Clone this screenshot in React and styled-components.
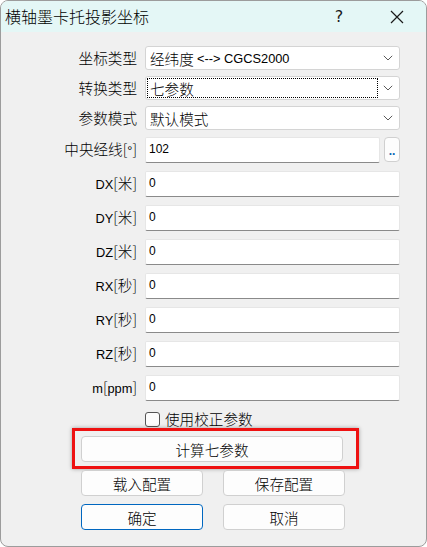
import styled, { createGlobalStyle } from "styled-components";

const GlobalStyle = createGlobalStyle`
  * { box-sizing: border-box; }
  body {
    margin: 0;
    background: #ffffff;
    font-family: "Noto Sans CJK SC", "Noto Sans", sans-serif;
  }
`;

const CJK = `"Noto Sans CJK SC", sans-serif`;
const LATIN = `"Liberation Sans", "Noto Sans CJK SC", sans-serif`;

const params = [
  { name: "DX", unit: "米" },
  { name: "DY", unit: "米" },
  { name: "DZ", unit: "米" },
  { name: "RX", unit: "秒" },
  { name: "RY", unit: "秒" },
  { name: "RZ", unit: "秒" },
  { name: "m", unit: "ppm", latinUnit: true },
];

function Chevron() {
  return (
    <svg width="10" height="6" viewBox="0 0 10 6">
      <path d="M0.8 0.8 L5 5 L9.2 0.8" fill="none" stroke="#5a5a5a" strokeWidth="1" />
    </svg>
  );
}

function Combo({ children, focus }) {
  return (
    <ComboBox>
      <ComboValue $focus={focus}>{children}</ComboValue>
      <Chevron />
    </ComboBox>
  );
}

export default function App() {
  return (
    <>
      <GlobalStyle />
      <Window>
        <TitleBar>
          <Title>横轴墨卡托投影坐标</Title>
          <CaptionButton>?</CaptionButton>
          <CaptionButton>
            <svg width="14" height="14" viewBox="0 0 14 14">
              <path d="M1 1 L13 13 M13 1 L1 13" stroke="#1a1a1a" strokeWidth="1.2" />
            </svg>
          </CaptionButton>
        </TitleBar>

        <Body>
          <Row $h={24}>
            <Label>坐标类型</Label>
            <Combo>
              经纬度 <Lat>&lt;--&gt; CGCS2000</Lat>
            </Combo>
          </Row>
          <Row $h={24} $mt={6}>
            <Label>转换类型</Label>
            <Combo focus>七参数</Combo>
          </Row>
          <Row $h={24} $mt={6}>
            <Label>参数模式</Label>
            <Combo>默认模式</Combo>
          </Row>
          <Row $h={26} $mt={7}>
            <Label>
              中央经线[<Lat>°</Lat>]
            </Label>
            <FieldWithButton>
              <TextInput>102</TextInput>
              <DotsButton>..</DotsButton>
            </FieldWithButton>
          </Row>

          {params.map((p) => (
            <Row key={p.name} $h={26} $mt={8}>
              <Label>
                <Lat>{p.name}</Lat>[
                {p.latinUnit ? <Lat>{p.unit}</Lat> : p.unit}]
              </Label>
              <TextInput>0</TextInput>
            </Row>
          ))}

          <Row $h={16} $mt={10}>
            <span />
            <CheckLine>
              <CheckBox />
              使用校正参数
            </CheckLine>
          </Row>

          <Highlight>
            <Button>计算七参数</Button>
          </Highlight>

          <ButtonRow $mt={1}>
            <Button>载入配置</Button>
            <Button>保存配置</Button>
          </ButtonRow>
          <ButtonRow $mt={8}>
            <Button $primary>确定</Button>
            <Button>取消</Button>
          </ButtonRow>
        </Body>
      </Window>
    </>
  );
}

const Window = styled.div`
  width: 427px;
  height: 547px;
  border: 1px solid #9c9c9c;
  border-radius: 8px;
  overflow: hidden;
  background: #f0f0f0;
  display: flex;
  flex-direction: column;
`;

const TitleBar = styled.div`
  height: 31px;
  background: #e4f7f6;
  display: flex;
  align-items: center;
  padding-left: 4px;
  flex-shrink: 0;
`;

const Title = styled.div`
  flex: 1;
  font-family: ${CJK};
  font-size: 16px;
  font-weight: 300;
  color: #000;
  line-height: 31px;
`;

const CaptionButton = styled.div`
  width: 58px;
  height: 31px;
  display: flex;
  align-items: center;
  justify-content: center;
  font-family: "DejaVu Sans", sans-serif;
  font-size: 16px;
  color: #1a1a1a;
`;

const Body = styled.div`
  padding-top: 14px;
  display: flex;
  flex-direction: column;
`;

const Row = styled.div`
  display: grid;
  grid-template-columns: 136px 255px;
  column-gap: 8px;
  height: ${(p) => p.$h}px;
  margin-top: ${(p) => p.$mt || 0}px;
`;

const Label = styled.div`
  align-self: center;
  text-align: right;
  font-family: ${CJK};
  font-size: 14.6px;
  font-weight: 300;
  line-height: 18px;
  color: #000;
  white-space: nowrap;
`;

const Lat = styled.span`
  font-family: ${LATIN};
  font-weight: 400;
  font-size: 12.8px;
`;

const ComboBox = styled.div`
  height: 100%;
  background: #ffffff;
  border: 1px solid #d4d4d4;
  border-radius: 3px;
  display: flex;
  align-items: center;
  padding-right: 6px;
  gap: 6px;
`;

const ComboValue = styled.div`
  flex: 1;
  height: 18px;
  margin-left: 2px;
  padding-left: 2px;
  display: flex;
  align-items: center;
  font-family: ${CJK};
  font-size: 14.6px;
  font-weight: 300;
  color: #000;
  white-space: pre;
  outline: ${(p) => (p.$focus ? "1px dotted #000" : "none")};
`;

const TextInput = styled.div`
  height: 100%;
  flex: 1;
  background: #ffffff;
  border: 1px solid #e6e6e6;
  border-bottom: 1px solid #8a8a8a;
  border-radius: 2px;
  padding: 4px 0 0 3px;
  font-family: ${LATIN};
  font-size: 12px;
  line-height: 14px;
  color: #000;
`;

const FieldWithButton = styled.div`
  display: flex;
  gap: 4px;
  height: 100%;
`;

const DotsButton = styled.div`
  width: 16px;
  height: 25px;
  background: #fdfdfd;
  border: 1px solid #d0d0d0;
  border-radius: 4px;
  display: flex;
  align-items: flex-end;
  justify-content: center;
  padding-bottom: 5px;
  font-family: ${LATIN};
  font-weight: bold;
  font-size: 12px;
  line-height: 10px;
  color: #0a64b4;
`;

const CheckLine = styled.label`
  display: flex;
  align-items: center;
  gap: 5px;
  font-family: ${CJK};
  font-size: 14.6px;
  font-weight: 300;
  line-height: 16px;
  color: #000;
`;

const CheckBox = styled.span`
  width: 15px;
  height: 15px;
  border: 1px solid #555;
  border-radius: 3px;
  background: #fdfdfd;
`;

const Highlight = styled.div`
  margin: 1px 0 0 71px;
  width: 287px;
  border: 3px solid #ee1111;
  padding: 5px 13px 4px 6px;
  box-shadow: 0 0 4px rgba(0, 0, 0, 0.35);
`;

const ButtonRow = styled.div`
  display: grid;
  grid-template-columns: 122px 122px;
  column-gap: 20px;
  margin: ${(p) => p.$mt}px 0 0 80px;
`;

const Button = styled.div`
  height: 26px;
  background: #fdfdfd;
  border: 1px solid ${(p) => (p.$primary ? "#0067c0" : "#d0d0d0")};
  border-radius: 4px;
  display: flex;
  align-items: center;
  justify-content: center;
  font-family: ${CJK};
  font-size: 14.6px;
  font-weight: 300;
  color: #000;
`;
